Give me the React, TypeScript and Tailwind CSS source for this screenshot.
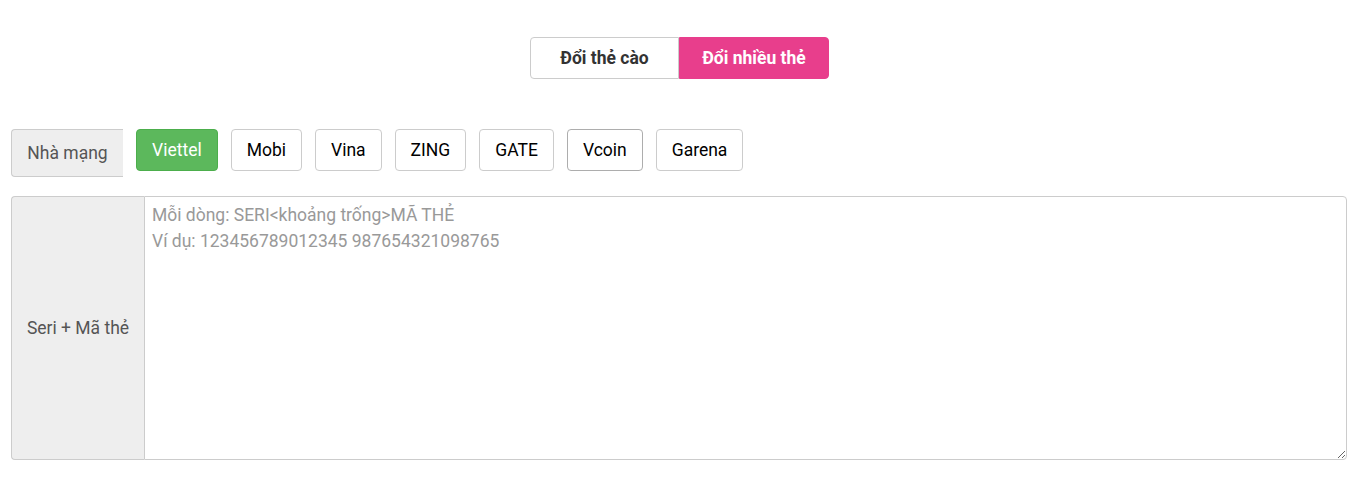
import React, { useState } from 'react';

const PROVIDERS = ['Viettel', 'Mobi', 'Vina', 'ZING', 'GATE', 'Vcoin', 'Garena'];

const App: React.FC = () => {
  const [mode, setMode] = useState<'single' | 'multi'>('multi');
  const [provider, setProvider] = useState('Viettel');

  return (
    <div className="min-h-[484px] bg-white pl-[11px] pr-[16px] pt-[37px] font-['Roboto',sans-serif] text-[#333]">
      {/* mode toggle */}
      <div className="flex justify-center pl-[1px]">
        <div className="flex h-[42px]">
          <button
            onClick={() => setMode('single')}
            className={`w-[149px] rounded-l-[4px] border text-[17.5px] font-bold ${
              mode === 'single' ? 'border-[#e83e8c] bg-[#e83e8c] text-white' : 'border-[#ccc] bg-white text-[#333]'
            }`}
          >
            Đổi thẻ cào
          </button>
          <button
            onClick={() => setMode('multi')}
            className={`w-[150px] rounded-r-[4px] border text-[17.5px] font-bold ${
              mode === 'multi' ? 'border-[#e83e8c] bg-[#e83e8c] text-white' : 'border-[#ccc] bg-white text-[#333]'
            }`}
          >
            Đổi nhiều thẻ
          </button>
        </div>
      </div>

      {/* provider row */}
      <div className="mt-[50px] flex items-start">
        <div className="flex h-[48px] w-[112px] items-center justify-center rounded-l-[4px] border border-r-0 border-[#ccc] bg-[#eee] text-[17.5px] text-[#555]">
          Nhà mạng
        </div>
        <div className="ml-[13px] flex gap-[13px]">
          {PROVIDERS.map((p) => (
            <button
              key={p}
              onClick={() => setProvider(p)}
              className={`h-[42px] rounded-[4px] border px-[15px] text-[17.5px] ${
                provider === p
                  ? 'border-[#4cae4c] bg-[#5cb85c] text-white'
                  : p === 'Vcoin'
                  ? 'border-[#adadad] bg-white text-black'
                  : 'border-[#ccc] bg-white text-black'
              }`}
            >
              {p}
            </button>
          ))}
        </div>
      </div>

      {/* serial + code */}
      <div className="mt-[19px] flex h-[264px]">
        <div className="flex w-[133px] shrink-0 items-center justify-center rounded-l-[4px] border border-r-0 border-[#ccc] bg-[#eee] text-[17.5px] text-[#555]">
          Seri + Mã thẻ
        </div>
        <textarea
          className="h-full flex-1 rounded-r-[4px] border border-[#ccc] px-[7px] py-[5px] text-[17.5px] leading-[26px] text-[#555] outline-none placeholder:text-[#999]"
          placeholder={'Mỗi dòng: SERI<khoảng trống>MÃ THẺ\nVí dụ: 123456789012345 987654321098765'}
        />
      </div>
    </div>
  );
};

export default App;
